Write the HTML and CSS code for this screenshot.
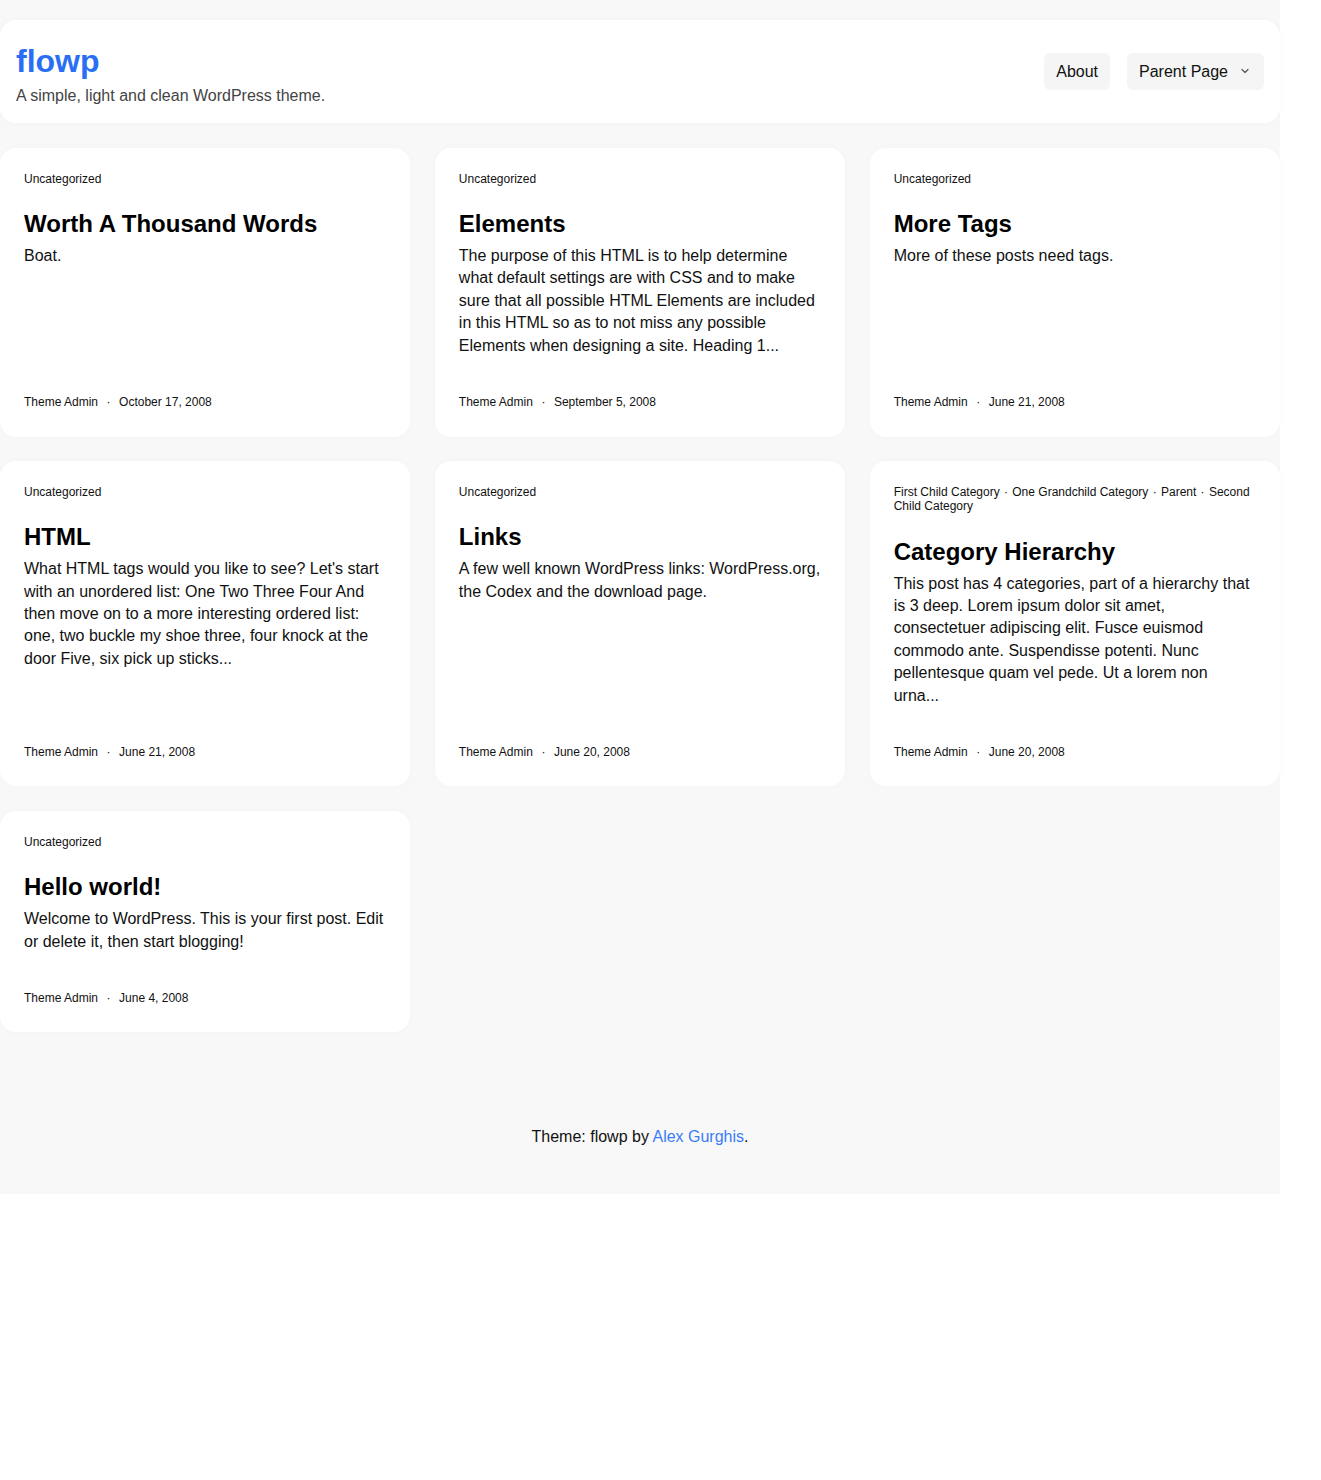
FILE: index.html
```html
<!DOCTYPE html>
<html lang="en">
<head>
    <meta charset="UTF-8">
    <meta name="viewport" content="width=device-width, initial-scale=1.0">
    <title>flowp</title>
    <link rel="stylesheet" href="styles.css">
</head>
<body>
    <div class="site">
        <header class="site-header">
            <div class="branding">
                <a class="site-title" href="#">flowp</a>
                <p class="site-description">A simple, light and clean WordPress theme.</p>
            </div>
            <nav class="main-nav">
                <a href="#" class="nav-item">About</a>
                <a href="#" class="nav-item has-children">Parent Page
                    <svg class="chevron" width="10" height="10" viewBox="0 0 10 10" aria-hidden="true">
                        <path d="M2 3.5 L5 6.5 L8 3.5" fill="none" stroke="#555" stroke-width="1.2" stroke-linecap="round" stroke-linejoin="round"/>
                    </svg>
                </a>
            </nav>
        </header>

        <main class="posts">
            <article class="post-card">
                <div class="post-cats"><a href="#">Uncategorized</a></div>
                <h2 class="post-title">Worth A Thousand Words</h2>
                <p class="post-excerpt">Boat.</p>
                <div class="post-meta"><span>Theme Admin</span><span class="sep">·</span><span>October 17, 2008</span></div>
            </article>

            <article class="post-card">
                <div class="post-cats"><a href="#">Uncategorized</a></div>
                <h2 class="post-title">Elements</h2>
                <p class="post-excerpt">The purpose of this HTML is to help determine what default settings are with CSS and to make sure that all possible HTML Elements are included in this HTML so as to not miss any possible Elements when designing a site. Heading 1...</p>
                <div class="post-meta"><span>Theme Admin</span><span class="sep">·</span><span>September 5, 2008</span></div>
            </article>

            <article class="post-card">
                <div class="post-cats"><a href="#">Uncategorized</a></div>
                <h2 class="post-title">More Tags</h2>
                <p class="post-excerpt">More of these posts need tags.</p>
                <div class="post-meta"><span>Theme Admin</span><span class="sep">·</span><span>June 21, 2008</span></div>
            </article>

            <article class="post-card">
                <div class="post-cats"><a href="#">Uncategorized</a></div>
                <h2 class="post-title">HTML</h2>
                <p class="post-excerpt">What HTML tags would you like to see? Let's start with an unordered list: One Two Three Four And then move on to a more interesting ordered list: one, two buckle my shoe three, four knock at the door Five, six pick up sticks...</p>
                <div class="post-meta"><span>Theme Admin</span><span class="sep">·</span><span>June 21, 2008</span></div>
            </article>

            <article class="post-card">
                <div class="post-cats"><a href="#">Uncategorized</a></div>
                <h2 class="post-title">Links</h2>
                <p class="post-excerpt">A few well known WordPress links: WordPress.org, the Codex and the download page.</p>
                <div class="post-meta"><span>Theme Admin</span><span class="sep">·</span><span>June 20, 2008</span></div>
            </article>

            <article class="post-card">
                <div class="post-cats"><a href="#">First Child Category</a><span class="dot">·</span><a href="#">One Grandchild Category</a><span class="dot">·</span><a href="#">Parent</a><span class="dot">·</span><a href="#">Second Child Category</a></div>
                <h2 class="post-title">Category Hierarchy</h2>
                <p class="post-excerpt">This post has 4 categories, part of a hierarchy that is 3 deep. Lorem ipsum dolor sit amet, consectetuer adipiscing elit. Fusce euismod commodo ante. Suspendisse potenti. Nunc pellentesque quam vel pede. Ut a lorem non urna...</p>
                <div class="post-meta"><span>Theme Admin</span><span class="sep">·</span><span>June 20, 2008</span></div>
            </article>

            <article class="post-card">
                <div class="post-cats"><a href="#">Uncategorized</a></div>
                <h2 class="post-title">Hello world!</h2>
                <p class="post-excerpt">Welcome to WordPress. This is your first post. Edit or delete it, then start blogging!</p>
                <div class="post-meta"><span>Theme Admin</span><span class="sep">·</span><span>June 4, 2008</span></div>
            </article>
        </main>

        <footer class="site-footer">
            <p>Theme: flowp by <a href="#">Alex Gurghis</a>.</p>
        </footer>
    </div>
</body>
</html>
```

FILE: styles.css
```css
/* Base */
html {
    background: #fff;
}

body {
    margin: 0;
    font-family: "Liberation Sans", Arial, Helvetica, sans-serif;
    color: #111;
}

a {
    color: inherit;
    text-decoration: none;
}

.site {
    max-width: 1280px;
    background-color: #f8f8f8;
    padding-top: 20px;
}

/* Header */
.site-header {
    display: flex;
    align-items: center;
    justify-content: space-between;
    background: #fff;
    border-radius: 16px;
    padding: 16px 16px 15px;
    box-shadow: 0 0 8px rgba(0, 0, 0, 0.025);
}

.branding {
    padding-top: 6px;
}

.site-title {
    display: block;
    font-size: 32px;
    font-weight: bold;
    line-height: 1.2;
    color: #2a6ef5;
    margin-bottom: 4px;
}

.site-description {
    margin: 0;
    font-size: 16px;
    line-height: 1.5;
    color: #444;
}

.main-nav {
    display: flex;
    gap: 17px;
    margin-top: -2px;
}

.nav-item {
    display: flex;
    align-items: center;
    gap: 12px;
    background: #f5f5f5;
    border-radius: 6px;
    padding: 8px 12px;
    font-size: 16px;
    line-height: 21px;
    color: #111;
}

.nav-item.has-children {
    padding-right: 14px;
}

/* Post grid */
.posts {
    display: grid;
    grid-template-columns: repeat(3, 1fr);
    gap: 24.5px;
    margin-top: 24.5px;
    align-items: stretch;
}

.post-card {
    display: flex;
    flex-direction: column;
    background: #fff;
    border-radius: 16px;
    padding: 24px 24px 23.5px;
    box-shadow: 0 0 8px rgba(0, 0, 0, 0.02);
}

.post-cats {
    font-size: 12px;
    line-height: 1.2;
    color: #111;
}

.post-cats .dot {
    margin: 0 4.3px;
}

.post-title {
    margin: 24px 0 6px;
    font-size: 24px;
    line-height: 1.2;
    font-weight: bold;
    color: #000;
}

.post-excerpt {
    margin: 0;
    font-size: 16px;
    line-height: 1.4;
    color: #111;
}

.post-meta {
    display: flex;
    align-items: center;
    margin-top: auto;
    padding-top: 34px;
    font-size: 12px;
    line-height: 22px;
    color: #111;
}

.post-meta .sep {
    margin: 0 8.5px;
}

/* Footer */
.site-footer {
    padding: 96px 0 47px;
    text-align: center;
    font-size: 16px;
    line-height: 1.15;
}

.site-footer p {
    margin: 0;
}

.site-footer a {
    color: #3a7cf6;
}
```
